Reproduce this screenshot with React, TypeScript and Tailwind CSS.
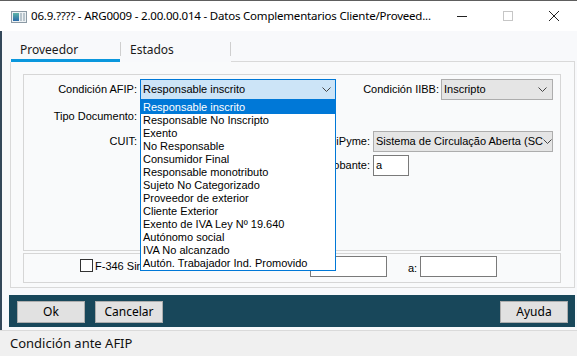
import React from 'react';

const afipOptions = [
  'Responsable inscrito',
  'Responsable No Inscripto',
  'Exento',
  'No Responsable',
  'Consumidor Final',
  'Responsable monotributo',
  'Sujeto No Categorizado',
  'Proveedor de exterior',
  'Cliente Exterior',
  'Exento de IVA Ley Nº 19.640',
  'Autónomo social',
  'IVA No alcanzado',
  'Autón. Trabajador Ind. Promovido',
];

const Chevron: React.FC = () => (
  <svg width="9" height="5" viewBox="0 0 9 5" className="shrink-0">
    <path d="M0.5 0.5 L4.5 4.5 L8.5 0.5" fill="none" stroke="#444" strokeWidth="1" />
  </svg>
);

const AppIcon: React.FC = () => (
  <svg width="16" height="12" viewBox="0 0 16 12">
    <defs>
      <linearGradient id="ic" x1="0" y1="0" x2="0" y2="1">
        <stop offset="0" stopColor="#5bb3a8" />
        <stop offset="1" stopColor="#2a6aa8" />
      </linearGradient>
    </defs>
    <rect x="0.5" y="0.5" width="15" height="11" fill="#eef2f4" stroke="#8c9aa5" />
    <rect x="2" y="2" width="6" height="8" fill="url(#ic)" />
    <rect x="9" y="2" width="2" height="8" fill="#b9c5cd" />
    <rect x="12" y="2" width="2" height="8" fill="#b9c5cd" />
  </svg>
);

const Button: React.FC<{ label: string }> = ({ label }) => (
  <button className="w-[68px] h-[22px] bg-[#e1e1e1] border border-[#adadad] text-[12px] text-black font-['Noto_Sans',sans-serif] leading-none">
    {label}
  </button>
);

export default function App() {
  return (
    <div className="w-[577px] h-[356px] overflow-hidden flex flex-col bg-[#f8f9fb] font-['Liberation_Sans',sans-serif] text-[11px] text-black">
      {/* Title bar */}
      <div className="h-[31px] shrink-0 bg-white border-t border-[#5e5e5e] flex items-center">
        <div className="ml-[11px] mt-[1px]">
          <AppIcon />
        </div>
        <div className="ml-[4px] flex-1 text-[11.5px] tracking-[-0.2px] text-black font-['Noto_Sans',sans-serif] whitespace-nowrap">
          06.9.???? - ARG0009 - 2.00.00.014 - Datos Complementarios Cliente/Proveed...
        </div>
        <div className="flex h-full">
          <div className="w-[46px] h-full flex items-center justify-center">
            <div className="w-[10px] h-px bg-[#222]" />
          </div>
          <div className="w-[46px] h-full flex items-center justify-center">
            <div className="w-[10px] h-[10px] border border-[#c6c6c6]" />
          </div>
          <div className="w-[46px] h-full flex items-center justify-center">
            <svg width="10" height="10" viewBox="0 0 10 10">
              <path d="M0 0 L10 10 M10 0 L0 10" stroke="#222" strokeWidth="1" />
            </svg>
          </div>
        </div>
      </div>

      {/* Body */}
      <div className="flex-1 flex flex-col border-l-2 border-[#34485a]">
        {/* Tabs */}
        <div className="mt-[11px] h-[20px] ml-[9px] mr-[2px] flex font-['Noto_Sans',sans-serif] text-[12px] text-[#1a1a1a]">
          <div className="w-[109px] h-full relative pl-[9px] leading-[15px]">
            Proveedor
            <div className="absolute left-0 right-0 bottom-0 h-[3px] bg-[#0a97dd]" />
          </div>
          <div className="w-px h-[14px] bg-[#cfcfcf]" />
          <div className="w-[109px] h-full pl-[9px] leading-[15px]">Estados</div>
          <div className="w-px h-[14px] bg-[#cfcfcf]" />
          <div className="flex-1 border-b border-[#d9d9d9]" />
        </div>

        {/* Panel */}
        <div className="ml-[8px] mr-[2px] h-[226px] border-x border-b border-[#d9d9d9] bg-[#f9fafb] pt-[12px] pl-[12px] pr-[13px]">
          {/* Group 1 */}
          <div className="relative h-[177px] border border-[#d6d6d6] pt-[4px]">
            <div className="flex items-center h-[21px]">
              <div className="w-[113px] text-right whitespace-nowrap">Condición AFIP:</div>
              <div className="relative ml-[3px] w-[196px] h-[21px]">
                <div className="h-full border border-[#0078d7] bg-[#cce4f7] flex items-center pl-[2px] pr-[4px]">
                  <span className="flex-1">Responsable inscrito</span>
                  <Chevron />
                </div>
                <div className="absolute left-0 top-full w-[196px] z-10 bg-white border border-[#0078d7]">
                  {afipOptions.map((opt, i) => (
                    <div
                      key={opt}
                      className={
                        i === 0
                          ? 'h-[13px] leading-[13px] pl-[2px] whitespace-nowrap bg-[#0078d7] text-white'
                          : 'h-[13px] leading-[13px] pl-[2px] whitespace-nowrap'
                      }
                    >
                      {opt}
                    </div>
                  ))}
                </div>
              </div>
              <div className="w-[103px] text-right whitespace-nowrap">Condición IIBB:</div>
              <div className="ml-[2px] w-[112px] h-[21px] border border-[#adadad] bg-[#e5e5e5] flex items-center pl-[2px] pr-[5px]">
                <span className="flex-1">Inscripto</span>
                <Chevron />
              </div>
            </div>

            <div className="flex items-center h-[21px] mt-[6px]">
              <div className="w-[113px] text-right whitespace-nowrap">Tipo Documento:</div>
              <div className="ml-[3px] w-[196px] h-[21px] border border-[#adadad] bg-[#e5e5e5]" />
            </div>

            <div className="flex items-center h-[21px] mt-[4px]">
              <div className="w-[113px] text-right whitespace-nowrap">CUIT:</div>
              <div className="ml-[3px] w-[196px] h-[21px] border border-[#7a7a7a] bg-white" />
              <div className="w-[34px] flex justify-end whitespace-nowrap">Condición MiPyme:</div>
              <div className="ml-[3px] w-[180px] h-[21px] border border-[#adadad] bg-[#e5e5e5] flex items-center pl-[2px] pr-[5px]">
                <span className="flex-1 whitespace-nowrap">Sistema de Circulação Aberta (SC</span>
                <Chevron />
              </div>
            </div>

            <div className="flex items-center h-[21px] mt-[3px]">
              <div className="w-[113px]" />
              <div className="ml-[3px] w-[196px]" />
              <div className="w-[34px] flex justify-end whitespace-nowrap">Letra Comprobante:</div>
              <div className="ml-[3px] w-[36px] h-[21px] border border-[#7a7a7a] bg-white flex items-center pl-[2px]">
                a
              </div>
            </div>
          </div>

          {/* Group 2 */}
          <div className="mt-[2px] h-[30px] border border-[#d6d6d6] flex items-start">
            <div className="ml-[56px] mt-[5px] w-[13px] h-[13px] border border-[#333] bg-white" />
            <div className="ml-[2px] mt-[4px] w-[46px] overflow-hidden whitespace-nowrap text-[11px]">F-346 Sircreb</div>
            <div className="w-[169px]" />
            <div className="mt-[2px] w-[77px] h-[21px] border border-[#7a7a7a] bg-white" />
            <div className="ml-[21px] mt-[6px]">a:</div>
            <div className="ml-[3px] mt-[2px] w-[77px] h-[21px] border border-[#7a7a7a] bg-white" />
          </div>
        </div>

        {/* Footer buttons */}
        <div className="mt-[7px] ml-[7px] mr-[2px] h-[32px] bg-[#18475a] flex items-start pt-[6px] pl-[8px] pr-[7px]">
          <Button label="Ok" />
          <div className="ml-[10px]">
            <Button label="Cancelar" />
          </div>
          <div className="flex-1" />
          <Button label="Ayuda" />
        </div>
        <div className="h-[3px]" />
      </div>

      {/* Status bar */}
      <div className="h-[26px] shrink-0 bg-[#f0f0f0] border-t border-[#dadada] pl-[10px] flex items-center font-['Noto_Sans',sans-serif] text-[13px] text-[#111]">
        Condición ante AFIP
      </div>
    </div>
  );
}
